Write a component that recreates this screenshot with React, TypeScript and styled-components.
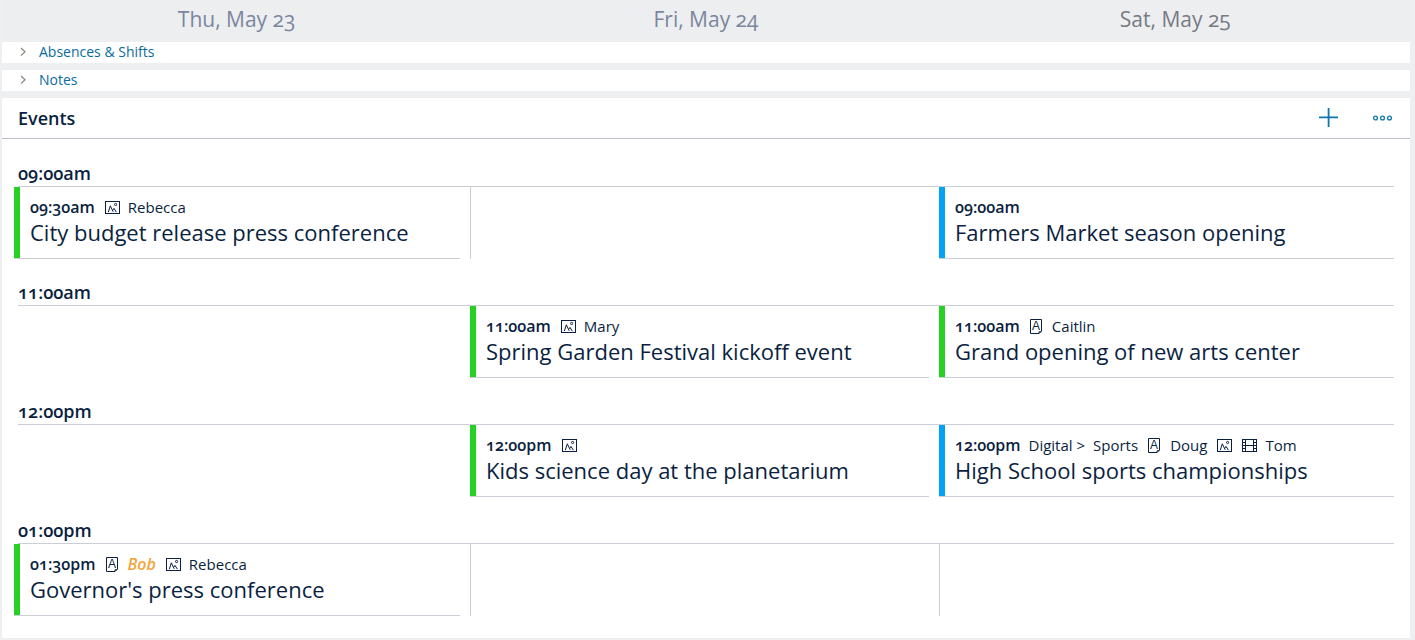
import React from "react";
import styled, { createGlobalStyle } from "styled-components";

const NAVY = "#0b1f41";
const LINK = "#0a6c9c";
const RULE = "#cbced6";

const GlobalStyle = createGlobalStyle`
  *, *::before, *::after { box-sizing: border-box; }
  body {
    margin: 0;
    background: #eeeff0;
    color: ${NAVY};
    font-family: "Open Sans", "Noto Sans", sans-serif;
    font-variant-numeric: oldstyle-nums;
  }
  h2, h3, h4, p { margin: 0; }
`;

const Page = styled.main`
  padding: 0 5px 2px 2px;
`;

const DayHeader = styled.header`
  display: grid;
  grid-template-columns: repeat(3, 1fr);
  height: 42px;
  background: #edeef0;
`;

const Day = styled.h2<{ $weekend?: boolean }>`
  color: ${(p) => (p.$weekend ? "#777b84" : "#7c869e")};
  font-size: 21px;
  font-weight: 400;
  line-height: 38px;
  text-align: center;
`;

const Sections = styled.div`
  display: flex;
  flex-direction: column;
  gap: 7px;
`;

const Collapsed = styled.button`
  display: flex;
  align-items: center;
  gap: 12px;
  height: 21px;
  padding: 0 17px 2px;
  border: 0;
  background: #fff;
  color: ${LINK};
  font: inherit;
  font-size: 14px;
  line-height: 19px;
  text-align: left;
  cursor: pointer;
`;

const Panel = styled.section`
  padding-bottom: 22px;
  background: #fff;
`;

const PanelHeader = styled.div`
  display: flex;
  align-items: center;
  height: 41px;
  margin-bottom: 1px;
  padding: 0 16px;
  border-bottom: 1px solid #bbbfcc;
`;

const PanelTitle = styled.h3`
  flex: 1;
  font-size: 18px;
  font-weight: 600;
  line-height: 24px;
`;

const Actions = styled.div`
  display: flex;
  gap: 32px;
`;

const IconButton = styled.button`
  display: flex;
  align-items: center;
  justify-content: center;
  width: 22px;
  height: 22px;
  padding: 0;
  border: 0;
  background: none;
  color: #0c78ab;
  cursor: pointer;
`;

const SlotLabel = styled.h4`
  height: 47px;
  margin: 0 16px;
  padding-top: 21px;
  border-bottom: 1px solid ${RULE};
  font-size: 18px;
  font-weight: 600;
  line-height: 24px;
`;

const SlotGrid = styled.div`
  display: grid;
  grid-template-columns: 456fr 469fr 455fr;
  padding: 0 16px 0 12px;
`;

const Cell = styled.div<{ $divided?: boolean }>`
  height: 72px;
  padding-right: 10px;
  border-left: ${(p) => (p.$divided ? `1px solid ${RULE}` : "0")};
  &:last-child { padding-right: 0; }
`;

const EventCard = styled.article<{ $accent: string }>`
  height: 100%;
  padding: 8px 0 0 16px;
  border-bottom: 1px solid ${RULE};
  box-shadow: inset 6px 0 0 ${(p) => p.$accent};
`;

const Meta = styled.div`
  display: flex;
  align-items: center;
  gap: 8px;
  height: 24px;
  font-size: 15px;
  line-height: 24px;
  white-space: nowrap;
`;

const Time = styled.time`
  font-size: 16px;
  font-weight: 600;
`;

const Pending = styled.em`
  color: #f0a63c;
  font-size: 16px;
  font-weight: 600;
`;

const Title = styled.p`
  font-size: 22px;
  line-height: 27px;
  white-space: nowrap;
`;

const MediaIcon = styled.svg`
  flex: none;
  margin-left: 2px;
  fill: none;
  stroke: ${NAVY};
`;

const PageIcon = styled(MediaIcon)`
  margin-right: 2px;
  font-family: "Liberation Sans", sans-serif;
  font-size: 12px;
  line-height: 14px;
`;

const PhotoIcon = () => (
  <MediaIcon width="15" height="13" viewBox="0 0 15 13" role="img" aria-label="Photo">
    <rect x="0.5" y="0.5" width="14" height="12" />
    <path d="M3.3 11.2 5.3 4.8 8.2 10.8M7.7 9.4 9 7.4 11.4 11.2" />
    <circle cx="10.6" cy="3.5" r="1.1" />
  </MediaIcon>
);

const ArticleIcon = () => (
  <PageIcon width="12" height="15" viewBox="0 0 12 15" role="img" aria-label="Article">
    <path d="M0.5 0.5H11.5V12L9 14.5H0.5ZM9 14.3V12.8H11.3" />
    <text x="6" y="11.4" textAnchor="middle" fill={NAVY} stroke="none">A</text>
  </PageIcon>
);

const VideoIcon = () => (
  <MediaIcon width="15" height="13" viewBox="0 0 15 13" role="img" aria-label="Video">
    <rect x="0.5" y="0.5" width="14" height="12" />
    <path d="M3.5 0V13M11.5 0V13M3.5 6.5H11.5M0 3.5H3M0 6.5H3M0 9.5H3M12 3.5H15M12 6.5H15M12 9.5H15" />
  </MediaIcon>
);

const Chevron = () => (
  <svg width="8" height="10" viewBox="0 0 8 10" fill="none" stroke="#84877c" aria-hidden="true">
    <path d="M2 1 6 4.8 2 8.6" strokeWidth="1.2" />
  </svg>
);

type EventItem = { time: string; title: string; accent: string; meta?: React.ReactNode };

const GREEN = "#26d123";
const BLUE = "#02a4f2";

const slots: { label: string; cells: (EventItem | "divider" | null)[] }[] = [
  {
    label: "09:00am",
    cells: [
      { time: "09:30am", title: "City budget release press conference", accent: GREEN, meta: <><PhotoIcon /><span>Rebecca</span></> },
      "divider",
      { time: "09:00am", title: "Farmers Market season opening", accent: BLUE },
    ],
  },
  {
    label: "11:00am",
    cells: [
      null,
      { time: "11:00am", title: "Spring Garden Festival kickoff event", accent: GREEN, meta: <><PhotoIcon /><span>Mary</span></> },
      { time: "11:00am", title: "Grand opening of new arts center", accent: GREEN, meta: <><ArticleIcon /><span>Caitlin</span></> },
    ],
  },
  {
    label: "12:00pm",
    cells: [
      null,
      { time: "12:00pm", title: "Kids science day at the planetarium", accent: GREEN, meta: <PhotoIcon /> },
      {
        time: "12:00pm",
        title: "High School sports championships",
        accent: BLUE,
        meta: (
          <><span>Digital &gt;</span><span>Sports</span><ArticleIcon /><span>Doug</span><PhotoIcon /><VideoIcon /><span>Tom</span></>
        ),
      },
    ],
  },
  {
    label: "01:00pm",
    cells: [
      { time: "01:30pm", title: "Governor's press conference", accent: GREEN, meta: <><ArticleIcon /><Pending>Bob</Pending><PhotoIcon /><span>Rebecca</span></> },
      "divider",
      "divider",
    ],
  },
];

export default function App() {
  return (
    <>
      <GlobalStyle />
      <Page>
        <DayHeader>
          <Day>Thu, May 23</Day>
          <Day>Fri, May 24</Day>
          <Day $weekend>Sat, May 25</Day>
        </DayHeader>
        <Sections>
          <Collapsed type="button" aria-expanded="false"><Chevron />Absences &amp; Shifts</Collapsed>
          <Collapsed type="button" aria-expanded="false"><Chevron />Notes</Collapsed>
          <Panel>
            <PanelHeader>
              <PanelTitle>Events</PanelTitle>
              <Actions>
                <IconButton type="button" aria-label="Add event">
                  <svg width="20" height="20" viewBox="0 0 20 20" fill="none" stroke="currentColor" strokeWidth="1.8">
                    <path d="M9.6 0V19M0 9.4H19" />
                  </svg>
                </IconButton>
                <IconButton type="button" aria-label="More options">
                  <svg width="20" height="6" viewBox="0 0 20 6" fill="none" stroke="currentColor" strokeWidth="1.3">
                    <circle cx="2.5" cy="3" r="1.9" />
                    <circle cx="9.5" cy="3" r="1.9" />
                    <circle cx="16.5" cy="3" r="1.9" />
                  </svg>
                </IconButton>
              </Actions>
            </PanelHeader>
            {slots.map((slot) => (
              <section key={slot.label}>
                <SlotLabel>{slot.label}</SlotLabel>
                <SlotGrid>
                  {slot.cells.map((cell, i) => (
                    <Cell key={i} $divided={cell === "divider"}>
                      {cell && cell !== "divider" && (
                        <EventCard $accent={cell.accent}>
                          <Meta>
                            <Time>{cell.time}</Time>
                            {cell.meta}
                          </Meta>
                          <Title>{cell.title}</Title>
                        </EventCard>
                      )}
                    </Cell>
                  ))}
                </SlotGrid>
              </section>
            ))}
          </Panel>
        </Sections>
      </Page>
    </>
  );
}
